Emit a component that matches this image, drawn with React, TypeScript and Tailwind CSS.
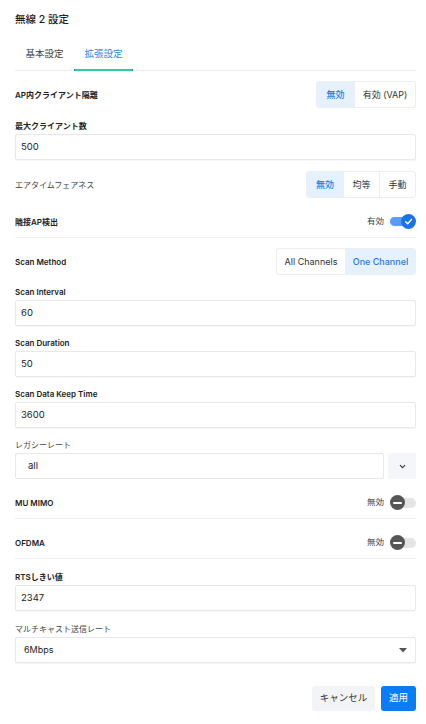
import { ChevronDown } from 'lucide-react';

const font = { fontFamily: 'Inter, "Noto Sans CJK JP", sans-serif' };

function Segmented(props: { items: { label: string; w: string }[]; active: number }) {
    return (
        <div className="flex h-[27px] rounded-[3px] border border-[#eceef1] overflow-hidden bg-white">
            {props.items.map((it, i) => (
                <div
                    key={i}
                    className={`${it.w} flex items-center justify-center text-[9px] ${i > 0 ? 'border-l border-[#eceef1]' : ''} ${
                        i === props.active ? 'bg-[#e5f1fd] text-[#1f7ae0] font-medium' : 'text-[#333]'
                    }`}
                >
                    {it.label}
                </div>
            ))}
        </div>
    );
}

function Field(props: { label: string; value: string; bold?: boolean; first?: boolean }) {
    return (
        <div className={props.first ? 'mt-[12px]' : 'mt-[11px]'}>
            <p
                className={`h-[12px] leading-[12px] text-[8px] ${
                    props.bold ? 'font-semibold text-[#222]' : 'text-[#444]'
                }`}
            >
                {props.label}
            </p>
            <div className="mt-[2px] h-[26px] flex items-center px-[5px] rounded-[2px] border border-[#e6e8eb] shadow-[0_1px_1px_rgba(0,0,0,0.04)] text-[9.5px] text-[#222]">
                {props.value}
            </div>
        </div>
    );
}

function Toggle(props: { on: boolean }) {
    return props.on ?
            <div className="relative w-[26px] h-[15px] flex items-center">
                <div className="h-[9px] w-[24px] rounded-full bg-[#5d9cf6]" />
                <div className="absolute right-0 top-0 w-[15px] h-[15px] rounded-full bg-[#1a73e8] flex items-center justify-center">
                    <svg width="9" height="9" viewBox="0 0 10 10">
                        <path d="M1.8 5.2 L4.1 7.4 L8.3 2.8" stroke="white" strokeWidth="1.6" fill="none" strokeLinecap="round" strokeLinejoin="round" />
                    </svg>
                </div>
            </div>
        :   <div className="relative w-[26px] h-[15px] flex items-center">
                <div className="h-[10px] w-[24px] ml-[2px] rounded-full bg-[#e4e4e4]" />
                <div className="absolute left-0 top-0 w-[15px] h-[15px] rounded-full bg-[#555] flex items-center justify-center">
                    <div className="w-[9px] h-[2px] bg-white rounded-full" />
                </div>
            </div>;
}

function SwitchRow(props: { label: string; on: boolean }) {
    return (
        <div className="mt-[8px] h-[32px] border-b border-[#eeeff1] flex items-center justify-between">
            <p className="text-[8px] font-semibold text-[#222]">{props.label}</p>
            <div className="flex items-center gap-[6px]">
                <span className="text-[8.5px] text-[#444]">{props.on ? '有効' : '無効'}</span>
                <Toggle on={props.on} />
            </div>
        </div>
    );
}

export default function App() {
    return (
        <div className="w-[426px] h-[724px] bg-white pl-[15px] pr-[10px]" style={font}>
            <div className="h-[40px] flex items-center">
                <h1 className="text-[10.5px] font-medium text-[#222]">無線 2 設定</h1>
            </div>

            <div className="flex border-b border-[#ececec] h-[31px]">
                <div className="w-[59px] flex justify-center pt-[7px] text-[9.5px] text-[#444]">基本設定</div>
                <div className="relative w-[59px] flex justify-center pt-[7px] text-[9.5px] text-[#2b8be6]">
                    拡張設定
                    <div className="absolute left-0 right-0 bottom-[-1px] h-[2px] bg-[#2fcaa8] border-x border-[#2a6de0]" />
                </div>
            </div>

            <div className="mt-[10px] h-[27px] flex items-center justify-between">
                <p className="text-[8px] font-semibold text-[#222]">AP内クライアント隔離</p>
                <Segmented
                    active={0}
                    items={[
                        { label: '無効', w: 'w-[37px]' },
                        { label: '有効 (VAP)', w: 'w-[61px]' },
                    ]}
                />
            </div>

            <Field first label="最大クライアント数" value="500" bold />

            <div className="mt-[11px] h-[27px] flex items-center justify-between">
                <p className="text-[8px] text-[#444]">エアタイムフェアネス</p>
                <Segmented
                    active={0}
                    items={[
                        { label: '無効', w: 'w-[36px]' },
                        { label: '均等', w: 'w-[36px]' },
                        { label: '手動', w: 'w-[36px]' },
                    ]}
                />
            </div>

            <div className="mt-[8px] h-[32px] border-b border-[#eeeff1] flex items-center justify-between">
                <p className="text-[8px] font-semibold text-[#222]">隣接AP検出</p>
                <div className="flex items-center gap-[6px]">
                    <span className="text-[8.5px] text-[#444]">有効</span>
                    <Toggle on />
                </div>
            </div>

            <div className="mt-[10px] h-[27px] flex items-center justify-between">
                <p className="text-[8px] font-semibold text-[#222]">Scan Method</p>
                <Segmented
                    active={1}
                    items={[
                        { label: 'All Channels', w: 'w-[68px]' },
                        { label: 'One Channel', w: 'w-[70px]' },
                    ]}
                />
            </div>

            <Field label="Scan Interval" value="60" bold />
            <Field label="Scan Duration" value="50" bold />
            <Field label="Scan Data Keep Time" value="3600" bold />

            <div className="mt-[11px]">
                <p className="h-[12px] leading-[12px] text-[8px] text-[#444]">レガシーレート</p>
                <div className="mt-[2px] flex gap-[4px]">
                    <div className="flex-1 h-[26px] flex items-center px-[12px] rounded-[2px] border border-[#e6e8eb] text-[9.5px] text-[#222]">
                        all
                    </div>
                    <div className="w-[28px] h-[26px] rounded-[2px] bg-[#f4f6f9] flex items-center justify-center">
                        <ChevronDown size={9} strokeWidth={3} className="text-[#333]" />
                    </div>
                </div>
            </div>

            <SwitchRow label="MU MIMO" on={false} />
            <SwitchRow label="OFDMA" on={false} />

            <Field first label="RTSしきい値" value="2347" bold />

            <div className="mt-[12px]">
                <p className="h-[12px] leading-[12px] text-[8px] text-[#444]">マルチキャスト送信レート</p>
                <div className="mt-[2px] h-[26px] flex items-center justify-between pl-[8px] pr-[8px] rounded-[2px] border border-[#e6e8eb] shadow-[0_1px_1px_rgba(0,0,0,0.04)] text-[9px] text-[#222]">
                    6Mbps
                    <svg width="8" height="5" viewBox="0 0 8 5">
                        <path d="M0 0 H8 L4 4.5 Z" fill="#555" />
                    </svg>
                </div>
            </div>

            <div className="mt-[23px] flex justify-end gap-[6px]">
                <button className="h-[25px] w-[63px] rounded-[3px] bg-[#f3f4f7] text-[9.5px] text-[#333]">キャンセル</button>
                <button className="h-[25px] w-[35px] rounded-[3px] bg-[#0a7cf5] text-[9.5px] text-white">適用</button>
            </div>
        </div>
    );
}
